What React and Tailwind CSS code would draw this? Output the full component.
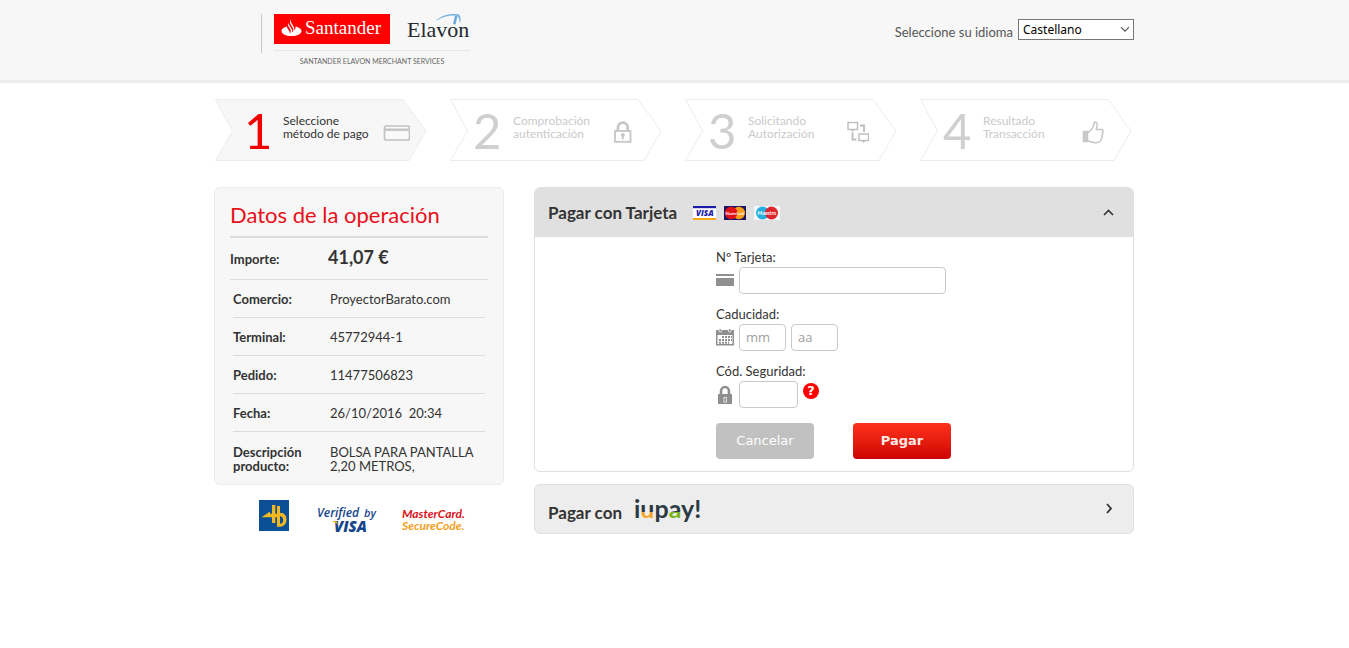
import React from "react";

const steps = [
  { n: "1", lines: ["Seleccione", "método de pago"], icon: "card", active: true },
  { n: "2", lines: ["Comprobación", "autenticación"], icon: "lock" },
  { n: "3", lines: ["Solicitando", "Autorización"], icon: "network" },
  { n: "4", lines: ["Resultado", "Transacción"], icon: "thumb" },
];

const details = [
  ["Comercio:", "ProyectorBarato.com"],
  ["Terminal:", "45772944-1"],
  ["Pedido:", "11477506823"],
  ["Fecha:", "26/10/2016\u00a0 20:34"],
  ["Descripción producto:", "BOLSA PARA PANTALLA 2,20 METROS,"],
];

function BrandLogos() {
  return (
    <div className="flex gap-3">
      <div className="h-[39px] w-px bg-[#c8c8c8]" />
      <div className="w-[196px]">
        <div className="flex items-start justify-between border-b border-[#e6e6e6] pb-[6px]">
          <div className="flex h-[30px] w-[116px] items-center bg-[#fe0000] pb-[3px] pl-[7px] font-['Liberation_Serif',serif] text-[19px] leading-[27px] text-white">
            <svg width="21" height="20" viewBox="0 0 21 20" className="mr-[3px] shrink-0" fill="#fff" aria-hidden="true">
              <path d="M10 1c-.8 2 .2 3.500 1.200 5.300 1.100 2 2.600 3.700 2.300 6.200 1-1.200 1.300-2.700.9-4C17.800 9.300 20.500 10.700 20.500 13c0 3-4.500 5-10 5s-10-2-10-5c0-2.200 2.200-3.900 5.400-4.600.2 1.300 1 2.500 1.900 3.900.7 1.100 1.200 2.100 1 3.400 1.400-1.600 1.200-3.200.2-4.900C7.800 8.800 6.300 7.200 7 4.800c.7 2 2.200 3.700 3.200 5.500.8 1.400 1.300 2.600 1 4.300 1.500-1.700 1.400-3.500.4-5.200C10.100 6.800 7.600 4.300 10 1z" />
            </svg>
            Santander
          </div>
          <svg width="63" height="30" viewBox="0 0 63 30" className="overflow-visible" role="img" aria-label="Elavon">
            <path d="M29 7C34 1 44-1 52 .5c2 2 2 6 1 9-.6-3.500-1-6-2.600-7.800C43 1 36 2.500 29 7z" fill="#76b2df" />
            <path d="M46 10l2-8.500 2.500.5-2 8.500z" fill="#6da8dc" />
            <text x="0" y="23" fontSize="22" fill="#252a30" className="font-['Liberation_Serif',serif]">Elavon</text>
          </svg>
        </div>
        <p className="mt-[6px] text-center text-[7px] leading-[9px] text-[#666]">SANTANDER ELAVON MERCHANT SERVICES</p>
      </div>
    </div>
  );
}

function StepIcon({ name }) {
  if (name === "card")
    return (
      <svg width="27" height="16" viewBox="0 0 27 16" aria-hidden="true">
        <rect x="1.500" y="1" width="25" height="14" rx="2" fill="#fafafa" stroke="#c2c2c2" strokeWidth="1.700" />
        <path d="M1.500 4.700h25" stroke="#c6c6c6" strokeWidth="2.500" />
      </svg>
    );
  if (name === "lock")
    return (
      <svg width="20" height="22" viewBox="0 0 20 22" fill="none" stroke="#c6c6c6" aria-hidden="true">
        <rect x="1" y="10" width="15.500" height="10.800" strokeWidth="1.800" />
        <path d="M3.900 10V6.500a4.900 4.900 0 0 1 9.800 0V10" strokeWidth="2.600" />
        <path d="M8.800 14v4.500" strokeWidth="1.800" />
        <circle cx="8.800" cy="14" r="1.500" fill="#c6c6c6" />
      </svg>
    );
  if (name === "network")
    return (
      <svg width="22" height="22" viewBox="0 0 22 22" fill="none" stroke="#bdbdbd" strokeWidth="1.400" aria-hidden="true">
        <rect x="1" y="1.500" width="9.500" height="7" />
        <rect x="12" y="13" width="9.500" height="6.500" />
        <path d="M4.500 9.800h2M15.500 20.800h2" />
        <path d="M13 4.500h4V11M5.500 11.500v7H9.500" strokeWidth="1.800" />
      </svg>
    );
  return (
    <svg width="22" height="23" viewBox="0 0 22 23" fill="none" stroke="#c6c6c6" strokeWidth="1.500" strokeLinejoin="round" aria-hidden="true">
      <path d="M1.500 10.500h4v10h-4z" fill="#cacaca" />
      <path d="M6 11.500C9.500 9.500 11.500 6.500 12 2c.3-1.300 3-1.200 3.200.8.200 2.200-.7 4.200-1 5.700H19.300c2 .2 2.300 2.300 1 3.200.8.900.6 2.300-.3 2.900.5 1 .2 2.200-.7 2.700.3 1.300-.3 2.500-1.300 3.200-1.500 1.600-6 1.400-8.700.5L6 20" />
    </svg>
  );
}

function Step({ n, lines, icon, active }) {
  return (
    <li className="relative flex h-[62px] w-[212px] items-center">
      <svg className="absolute inset-0" width="212" height="62" viewBox="0 0 212 62" aria-hidden="true">
        <path d="M1.500 .5H189L212 32 195 61.500H1.500L18.500 32z" fill={active ? "#f7f7f7" : "#fff"} stroke="#ececec" />
      </svg>
      <span className={active ? "relative ml-[30px] w-[39px] text-[49px] leading-[56px] text-[#f00000]" : "relative ml-[24px] w-[40px] text-[49px] leading-[56px] text-[#cfcfcf]"}>{n}</span>
      <span className={active ? "relative flex-1 pb-[7px] text-[12px] leading-[13px] text-[#333]" : "relative flex-1 pb-[7px] text-[12px] leading-[13px] text-[#cacaca]"}>
        {lines[0]}
        <br />
        {lines[1]}
      </span>
      <span className={active ? "relative mr-4 pt-[5px]" : "relative mr-[27px] pt-1"}>
        <StepIcon name={icon} />
      </span>
    </li>
  );
}

function SecurityLogos() {
  return (
    <div className="mt-[15px] flex items-start pl-[45px]">
      <svg width="30" height="31" viewBox="0 0 30 31" role="img" aria-label="4B">
        <rect width="30" height="31" fill="#0b4f94" />
        <path d="M2.500 17.300L11 11.500v2.300h2V5h3.300v8.800H18V6h3v7.800l.5-1c3.500 0 6 2.800 6 6.700s-2.500 7.200-6 7.200H18v-9.400h-1.700V23H13v-5.700z" fill="#f6b81e" />
        <path d="M21 16.200v7.600c4.200 0 4.200-7.600 0-7.600z" fill="#0b4f94" />
      </svg>
      <svg width="62" height="34" viewBox="0 0 62 34" className="ml-[28px] overflow-visible" role="img" aria-label="Verified by VISA">
        <g fontStyle="italic" fill="#15468c" className="font-['Open_Sans',sans-serif]">
          <text x="0" y="17" fontSize="12" fontWeight="600">Verified</text>
          <text x="47" y="17" fontSize="11" fontWeight="600">by</text>
          <text x="17" y="32" fontSize="15" fontWeight="800">VISA</text>
        </g>
        <path d="M14.500 21h5l2 5c-1-2.300-3.500-4-7-5z" fill="#f3a21b" />
      </svg>
      <svg width="64" height="34" viewBox="0 0 64 34" className="ml-[23px] overflow-visible" role="img" aria-label="MasterCard SecureCode">
        <g className="font-['Lato',sans-serif]" fontStyle="italic" fontSize="12" fontWeight="700">
          <text x="0" y="18" fill="#d9131a">MasterCard.</text>
          <text x="0" y="30" fill="#f2a01e">SecureCode.</text>
        </g>
      </svg>
    </div>
  );
}

function CardBrands() {
  return (
    <div className="flex items-center gap-2 pt-px">
      <svg width="23" height="14" viewBox="0 0 23 14" role="img" aria-label="VISA">
        <rect width="23" height="14" fill="#fff" />
        <rect width="23" height="2.200" fill="#1d1aa8" />
        <rect y="12" width="23" height="2" fill="#f9a61c" />
        <text x="3" y="10" fontSize="8" fontWeight="800" fontStyle="italic" fill="#1d1aa8" className="font-['Open_Sans',sans-serif]">VISA</text>
      </svg>
      <svg width="22" height="14" viewBox="0 0 22 14" role="img" aria-label="MasterCard">
        <rect width="22" height="14" fill="#1d1660" />
        <circle cx="14.800" cy="7" r="6.200" fill="#f9a01b" />
        <circle cx="7.200" cy="7" r="6.200" fill="#e2121b" />
        <text x="1.500" y="8.500" fontSize="3.500" fontWeight="700" fill="#fff" className="font-['Lato',sans-serif]">MasterCard</text>
      </svg>
      <svg width="26" height="14" viewBox="0 0 26 14" role="img" aria-label="Maestro">
        <rect width="26" height="14" fill="#f4f8fa" />
        <circle cx="8.500" cy="7" r="6.500" fill="#25aee0" />
        <circle cx="17.500" cy="7" r="6.500" fill="#e0242c" />
        <text x="3.500" y="8.800" fontSize="5" fontWeight="700" fill="#fff" className="font-['Lato',sans-serif]">Maestro</text>
      </svg>
    </div>
  );
}

const field = "h-[27px] rounded-[4px] border border-[#c9c9c9] bg-white px-[6px] font-['DejaVu_Sans',sans-serif] text-[13px] text-[#333] placeholder:font-['Open_Sans',sans-serif] placeholder:text-[#a0a0a0] outline-none";

function CardForm() {
  return (
    <form className="ml-[181px] pt-3 pb-3 text-[13px] text-[#333]" onSubmit={(e) => e.preventDefault()}>
      <div className="mb-3">
        <label htmlFor="pan" className="block pb-px leading-[17px]">Nº Tarjeta:</label>
        <div className="flex items-center gap-[5px]">
          <svg width="18" height="14" viewBox="0 0 18 14" fill="#8f8f8f" aria-hidden="true">
            <path d="M0 0h18v2H0zM0 4h18v8H0z" />
          </svg>
          <input id="pan" className={`${field} w-[207px]`} />
        </div>
      </div>
      <div className="mb-3">
        <label htmlFor="month" className="block pb-px leading-[17px]">Caducidad:</label>
        <div className="flex items-center gap-[5px]">
          <svg width="18" height="19" viewBox="0 0 18 19" aria-hidden="true">
            <path d="M0 2h18v15.500H0z" fill="#8f8f8f" />
            <path d="M1.500 7h15v9h-15z" fill="#fff" />
            <path d="M3 1.200v1.500a1.300 1.300 0 0 0 2.600 0V1.200M12.400 1.200v1.500a1.300 1.300 0 0 0 2.600 0V1.200" fill="#8f8f8f" stroke="#fff" strokeWidth=".8" />
            <path d="M6 9h10M3 12h13M3 14.800h10" stroke="#8f8f8f" strokeWidth="2" strokeDasharray="2 1" />
          </svg>
          <input id="month" placeholder="mm" className={`${field} w-[47px]`} />
          <input id="year" aria-label="Año" placeholder="aa" className={`${field} w-[47px]`} />
        </div>
      </div>
      <div>
        <label htmlFor="cvv" className="block pb-px leading-[17px]">Cód. Seguridad:</label>
        <div className="flex items-center gap-[5px]">
          <svg width="18" height="20" viewBox="0 0 18 20" aria-hidden="true">
            <path d="M5 10V6.500a4 4.500 0 0 1 8 0V10" fill="none" stroke="#8f8f8f" strokeWidth="2.600" />
            <path d="M2 9h14v10H2z" fill="#8f8f8f" />
            <rect x="8" y="12.500" width="2.500" height="4.500" fill="none" stroke="#e8e8e8" strokeWidth=".9" />
          </svg>
          <input id="cvv" className={`${field} w-[59px]`} />
          <button type="button" aria-label="Ayuda" className="mb-[7px] flex size-4 items-center justify-center rounded-full bg-[#fe0000] font-['DejaVu_Sans',sans-serif] text-[13px] leading-[16px] font-bold text-white">?</button>
        </div>
      </div>
      <div className="mt-[15px] flex gap-[39px] font-['DejaVu_Sans',sans-serif]">
        <button type="button" className="h-9 w-[98px] rounded-[4px] bg-[#c1c1c1] text-[13px] text-white">Cancelar</button>
        <button type="submit" className="h-9 w-[98px] rounded-[4px] bg-linear-to-b from-[#ff2f1c] to-[#cd0000] text-[13px] font-bold text-[#ffe9e6]">Pagar</button>
      </div>
    </form>
  );
}

function IupayLogo() {
  return (
    <svg width="66" height="32" viewBox="0 0 66 32" className="overflow-visible" role="img" aria-label="iupay!">
      <defs>
        <linearGradient id="warm" gradientUnits="userSpaceOnUse" x1="0" y1="0" x2="0" y2="32">
          <stop offset=".6" stopColor="#2b3a42" />
          <stop offset=".6" stopColor="#f2a72e" />
        </linearGradient>
        <linearGradient id="fresh" gradientUnits="userSpaceOnUse" x1="0" y1="0" x2="0" y2="32">
          <stop offset=".6" stopColor="#2b3a42" />
          <stop offset=".6" stopColor="#7ab51d" />
        </linearGradient>
      </defs>
      <text x="-1" y="25" fontSize="25" fontWeight="700" fill="#2b3a42" className="font-['Lato',sans-serif]">
        i<tspan fill="url(#warm)">u</tspan>p<tspan fill="url(#fresh)">a</tspan>y!
      </text>
    </svg>
  );
}

export default function App() {
  return (
    <div className="min-h-screen bg-white font-['Lato',sans-serif] text-[#333]">
      <header className="border-b-[3px] border-[#ececec] bg-[#f7f7f7] pr-px">
        <div className="mx-auto flex h-20 max-w-[920px] items-start justify-between pt-[14px] pl-[47px]">
          <BrandLogos />
          <div className="flex items-start gap-[5px] pt-[5px]">
            <label htmlFor="lang" className="pt-1 text-[13px] leading-[18px] text-[#555]">Seleccione su idioma</label>
            <div className="relative">
              <select id="lang" className="block h-[21px] w-[116px] appearance-none border border-[#777] bg-white pl-1 font-['Noto_Sans',sans-serif] text-[12px] leading-[19px] text-black">
                <option>Castellano</option>
              </select>
              <svg className="pointer-events-none absolute top-[7px] right-[4px]" width="10" height="7" viewBox="0 0 10 7" fill="none" stroke="#555" strokeWidth="1.200" aria-hidden="true">
                <path d="M1 1.200l4 4 4-4" />
              </svg>
            </div>
          </div>
        </div>
      </header>

      <div className="pr-px">
        <main className="mx-auto max-w-[920px] pt-4">
          <ol className="flex gap-[23px]">
            {steps.map((s) => (
              <Step key={s.n} {...s} />
            ))}
          </ol>

          <div className="mt-[26px] flex items-start gap-[30px]">
            <div className="w-[290px]">
              <section className="rounded-[6px] border border-[#ececec] bg-[#f7f7f7] px-[15px] pb-[11px]">
                <h1 className="border-b-2 border-[#dcdcdc] pt-[11px] pb-[6px] text-[22px] leading-[31px] text-[#e8101a]">Datos de la operación</h1>
                <div className="flex h-[42px] border-b border-[#dcdcdc] font-bold">
                  <span className="w-[98px] pt-[13px] text-[13px] leading-[17px]">Importe:</span>
                  <span className="pt-[7px] text-[18px] leading-[24px]">41,07 €</span>
                </div>
                <dl className="pr-[3px] pl-[3px]">
                  {details.map(([k, v], i) => (
                    <div key={k} className={i < 4 ? "flex border-b border-[#dcdcdc] pt-3 pb-[11px] text-[13px] leading-[14px]" : "flex pt-[13px] text-[13px] leading-[14px]"}>
                      <dt className="w-[97px] shrink-0 pr-4 font-bold">{k}</dt>
                      <dd className="flex-1">{v}</dd>
                    </div>
                  ))}
                </dl>
              </section>
              <SecurityLogos />
            </div>

            <div className="flex flex-1 flex-col gap-3">
              <section className="overflow-hidden rounded-[6px] border border-[#e0e0e0] bg-white">
                <button type="button" aria-expanded="true" className="flex h-[49px] w-full items-center bg-[#e0e0e0] pl-[13px] pr-[19px]">
                  <span className="mr-4 text-[17px] font-bold">Pagar con Tarjeta</span>
                  <CardBrands />
                  <svg className="ml-auto" width="11" height="7" viewBox="0 0 11 7" fill="none" stroke="#333" strokeWidth="1.600" aria-hidden="true">
                    <path d="M1 6l4.500-4.500L10 6" />
                  </svg>
                </button>
                <CardForm />
              </section>
              <section className="overflow-hidden rounded-[6px] border border-[#e0e0e0] bg-[#ededed]">
                <button type="button" aria-expanded="false" className="flex h-12 w-full items-center pl-[13px] pr-5">
                  <span className="mr-[13px] pt-2 text-[17px] font-bold">Pagar con</span>
                  <IupayLogo />
                  <svg className="ml-auto" width="7" height="13" viewBox="0 0 7 13" fill="none" stroke="#333" strokeWidth="1.800" aria-hidden="true">
                    <path d="M1 1l4 4.500L1 10" />
                  </svg>
                </button>
              </section>
            </div>
          </div>
        </main>
      </div>
    </div>
  );
}
